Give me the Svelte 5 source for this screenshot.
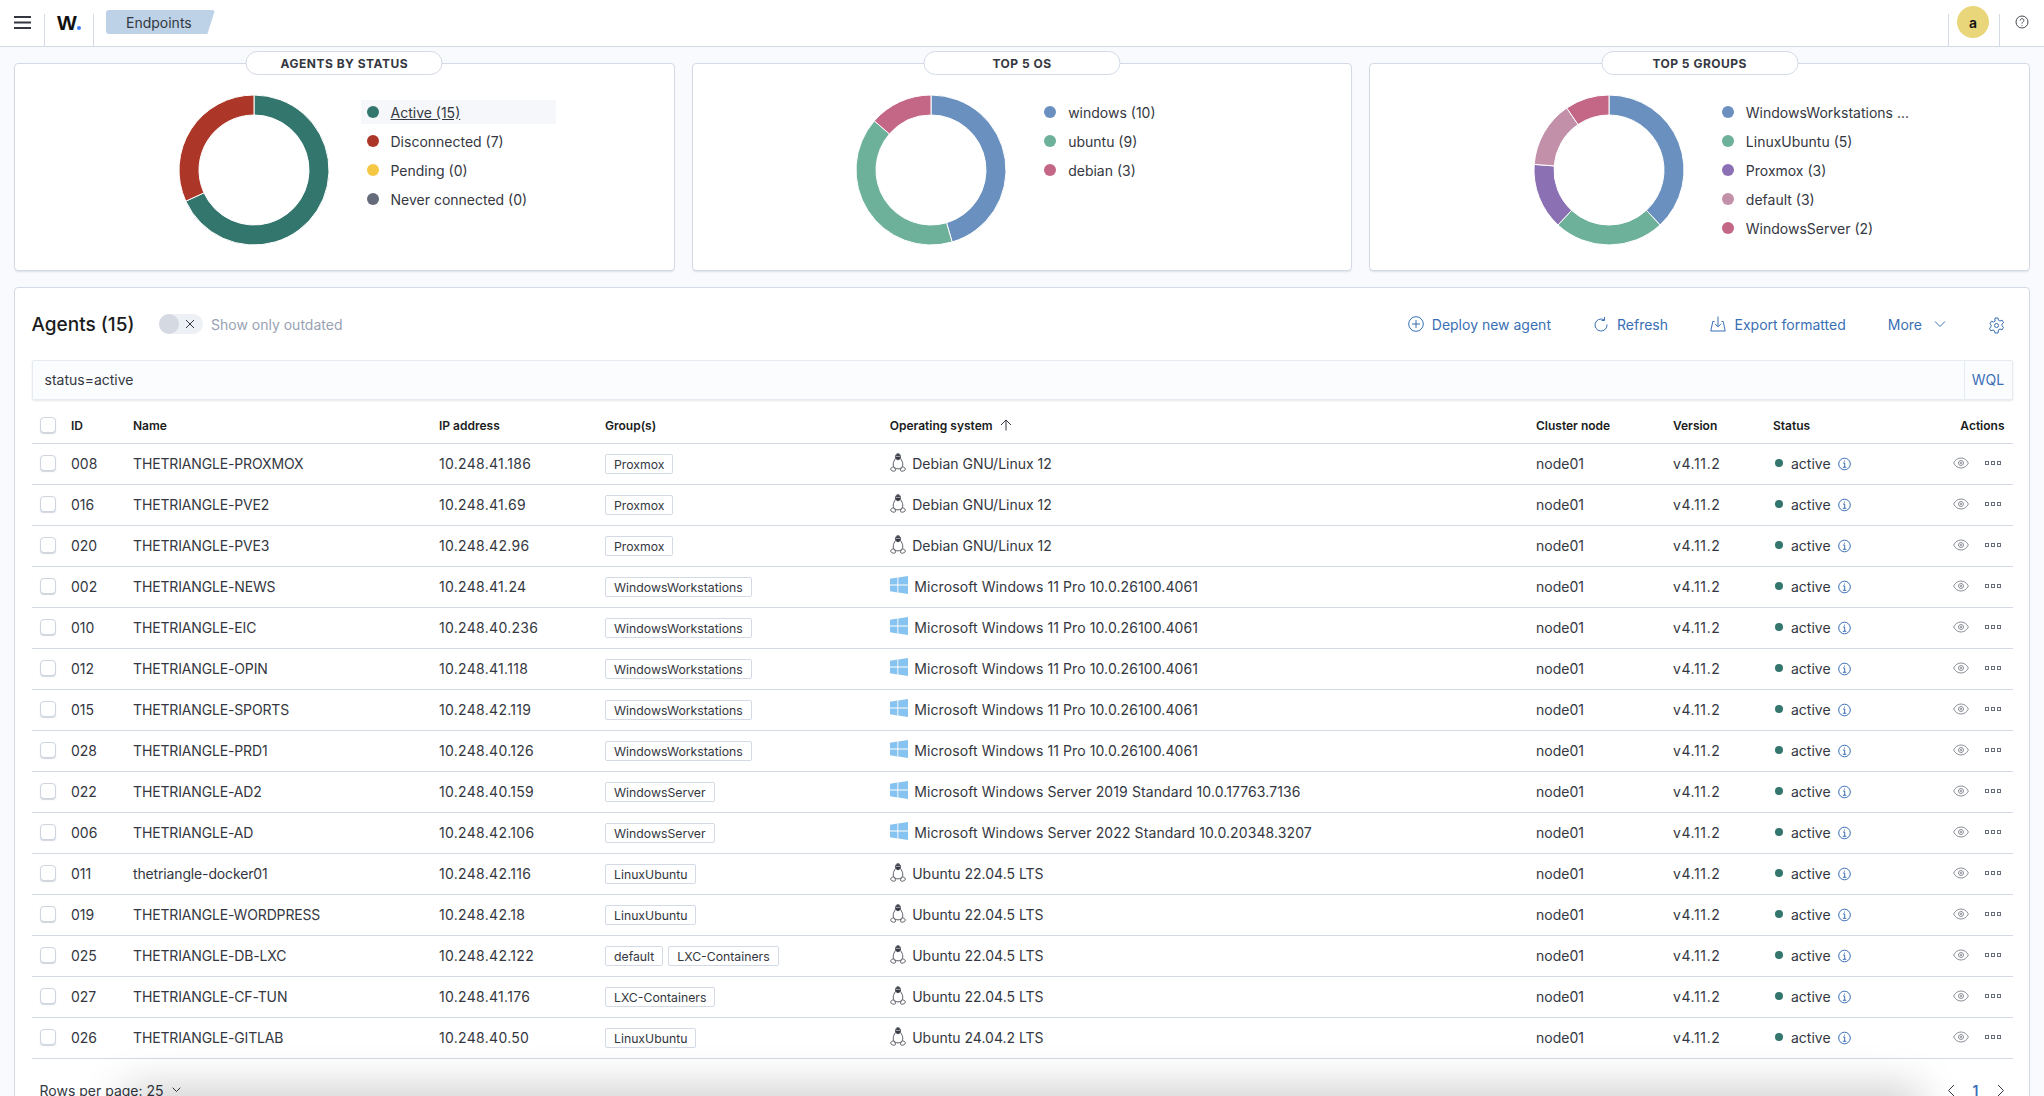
<script>
  const statusChart = {
    title: 'AGENTS BY STATUS',
    items: [
      { label: 'Active (15)', value: 15, color: '#33766e' },
      { label: 'Disconnected (7)', value: 7, color: '#ac3627' },
      { label: 'Pending (0)', value: 0, color: '#f4c845' },
      { label: 'Never connected (0)', value: 0, color: '#666b7c' }
    ]
  };
  const osChart = {
    title: 'TOP 5 OS',
    items: [
      { label: 'windows (10)', value: 10, color: '#6a90bf' },
      { label: 'ubuntu (9)', value: 9, color: '#6db19a' },
      { label: 'debian (3)', value: 3, color: '#c46686' }
    ]
  };
  const groupChart = {
    title: 'TOP 5 GROUPS',
    items: [
      { label: 'WindowsWorkstations ...', value: 8, color: '#6a90bf' },
      { label: 'LinuxUbuntu (5)', value: 5, color: '#6db19a' },
      { label: 'Proxmox (3)', value: 3, color: '#8b71b3' },
      { label: 'default (3)', value: 3, color: '#c290a9' },
      { label: 'WindowsServer (2)', value: 2, color: '#c46686' }
    ]
  };
  const charts = [statusChart, osChart, groupChart];

  const W11 = 'Microsoft Windows 11 Pro 10.0.26100.4061';
  const agents = [
    ['008', 'THETRIANGLE-PROXMOX', '10.248.41.186', ['Proxmox'], 'linux', 'Debian GNU/Linux 12'],
    ['016', 'THETRIANGLE-PVE2', '10.248.41.69', ['Proxmox'], 'linux', 'Debian GNU/Linux 12'],
    ['020', 'THETRIANGLE-PVE3', '10.248.42.96', ['Proxmox'], 'linux', 'Debian GNU/Linux 12'],
    ['002', 'THETRIANGLE-NEWS', '10.248.41.24', ['WindowsWorkstations'], 'win', W11],
    ['010', 'THETRIANGLE-EIC', '10.248.40.236', ['WindowsWorkstations'], 'win', W11],
    ['012', 'THETRIANGLE-OPIN', '10.248.41.118', ['WindowsWorkstations'], 'win', W11],
    ['015', 'THETRIANGLE-SPORTS', '10.248.42.119', ['WindowsWorkstations'], 'win', W11],
    ['028', 'THETRIANGLE-PRD1', '10.248.40.126', ['WindowsWorkstations'], 'win', W11],
    ['022', 'THETRIANGLE-AD2', '10.248.40.159', ['WindowsServer'], 'win', 'Microsoft Windows Server 2019 Standard 10.0.17763.7136'],
    ['006', 'THETRIANGLE-AD', '10.248.42.106', ['WindowsServer'], 'win', 'Microsoft Windows Server 2022 Standard 10.0.20348.3207'],
    ['011', 'thetriangle-docker01', '10.248.42.116', ['LinuxUbuntu'], 'linux', 'Ubuntu 22.04.5 LTS'],
    ['019', 'THETRIANGLE-WORDPRESS', '10.248.42.18', ['LinuxUbuntu'], 'linux', 'Ubuntu 22.04.5 LTS'],
    ['025', 'THETRIANGLE-DB-LXC', '10.248.42.122', ['default', 'LXC-Containers'], 'linux', 'Ubuntu 22.04.5 LTS'],
    ['027', 'THETRIANGLE-CF-TUN', '10.248.41.176', ['LXC-Containers'], 'linux', 'Ubuntu 22.04.5 LTS'],
    ['026', 'THETRIANGLE-GITLAB', '10.248.40.50', ['LinuxUbuntu'], 'linux', 'Ubuntu 24.04.2 LTS']
  ];

  // point on a circle, angle in turns from 12 o'clock
  function pt(r, t) {
    const a = t * 2 * Math.PI;
    return `${(75 + r * Math.sin(a)).toFixed(2)} ${(75 - r * Math.cos(a)).toFixed(2)}`;
  }

  function slices(items) {
    const total = items.reduce((s, i) => s + i.value, 0);
    let at = 0;
    return items.filter((i) => i.value > 0).map((i) => {
      const from = at;
      at += i.value / total;
      const big = at - from > 0.5 ? 1 : 0;
      return {
        color: i.color,
        d: `M${pt(75, from)}A75 75 0 ${big} 1 ${pt(75, at)}L${pt(55, at)}A55 55 0 ${big} 0 ${pt(55, from)}Z`
      };
    });
  }
</script>

<div class="page">
  <header class="topbar">
    <button class="menu" aria-label="menu">
      <svg width="17" height="13" viewBox="0 0 17 13"><path d="M0 1h17M0 6.500h17M0 12h17" stroke="#343741" stroke-width="2" /></svg>
    </button>
    <div class="logo">W<span class="logo-dot"></span></div>
    <div class="crumb"><span>Endpoints</span></div>
    <div class="spacer"></div>
    <div class="avatar-cell"><div class="avatar">a</div></div>
    <div class="help">
      <svg width="14" height="14" viewBox="0 0 14 14" fill="none" stroke="#343741" stroke-width=".9">
        <circle cx="7" cy="7" r="6" />
        <path d="M5.200 5.500C5.300 3 8.900 3.100 8.900 5.400 8.900 6.800 7 6.900 7 8.600" />
        <path d="M7 10v.9" />
      </svg>
    </div>
  </header>

  <section class="charts">
    {#each charts as chart}
      <div class="chart-card">
        <div class="pill">{chart.title}</div>
        <div class="chart-body">
          <svg class="donut" width="150" height="150" viewBox="0 0 150 150">
            {#each slices(chart.items) as s}
              <path d={s.d} fill={s.color} stroke="#fff" stroke-width="1" />
            {/each}
          </svg>
          <ul class="legend">
            {#each chart.items as item, i}
              <li class:hot={chart === statusChart && i === 0}>
                <span class="dot" style="background:{item.color}"></span>
                <span class="legend-text">{item.label}</span>
              </li>
            {/each}
          </ul>
        </div>
      </div>
    {/each}
  </section>

  <section class="panel">
    <div class="panel-head">
      <h1>Agents (15)</h1>
      <div class="switch">
        <span class="knob"></span>
        <svg width="10" height="10" viewBox="0 0 10 10"><path d="M1 1l8 8M9 1l-8 8" stroke="#343741" stroke-width="1" /></svg>
      </div>
      <span class="switch-label">Show only outdated</span>
      <div class="spacer"></div>
      <button class="link deploy">
        <svg width="16" height="16" viewBox="0 0 16 16" fill="none" stroke="#3a6fb5"><circle cx="8" cy="8" r="7.300" /><path d="M8 4v8M4 8h8" /></svg>
        Deploy new agent
      </button>
      <button class="link refresh">
        <svg width="14" height="15" viewBox="0 0 14 15" fill="none" stroke="#3a6fb5"><path d="M9.800 2.700A6 6 0 1 0 13 7.500" /><path d="M10.500 0v3.500H7.500" /></svg>
        Refresh
      </button>
      <button class="link export">
        <svg width="16" height="16" viewBox="0 0 16 16" fill="none" stroke="#3a6fb5"><path d="M4.500 5.500H2.800L.8 15h14.400l-2-9.500h-1.700" /><path d="M8 .5v10M5 7.800l3 3 3-3" /></svg>
        Export formatted
      </button>
      <button class="link more">
        More
        <svg width="12" height="8" viewBox="0 0 12 8" fill="none" stroke="#3a6fb5"><path d="M1 1.500l5 5 5-5" /></svg>
      </button>
      <button class="gear" aria-label="settings">
        <svg width="17" height="17" viewBox="0 0 17 17" fill="none" stroke="#3a6fb5">
          <path d="M7 1h3l.5 2.200 1.500.8 2.100-.8 1.400 2.500-1.600 1.500v1.600l1.600 1.500-1.400 2.500-2.100-.8-1.500.8L10 16H7l-.5-2.200-1.500-.8-2.100.8-1.400-2.500 1.600-1.500V8.200L2 6.700l1.400-2.500 2.100.8 1.500-.8z" />
          <circle cx="8.500" cy="8.500" r="2" />
        </svg>
      </button>
    </div>

    <div class="search">
      <div class="query">status=active</div>
      <div class="wql">WQL</div>
    </div>

    <table>
      <colgroup>
        <col class="c-check" /><col class="c-id" /><col class="c-name" /><col class="c-ip" /><col class="c-group" />
        <col class="c-os" /><col class="c-node" /><col class="c-ver" /><col class="c-status" /><col class="c-act" />
      </colgroup>
      <thead>
        <tr>
          <th><span class="box"></span></th>
          <th>ID</th>
          <th>Name</th>
          <th>IP address</th>
          <th>Group(s)</th>
          <th>
            <span class="sort">Operating system
              <svg width="12" height="12" viewBox="0 0 12 12" fill="none" stroke="#343741"><path d="M6 11.500V1M1 6l5-5 5 5" /></svg>
            </span>
          </th>
          <th>Cluster node</th>
          <th>Version</th>
          <th>Status</th>
          <th class="right">Actions</th>
        </tr>
      </thead>
      <tbody>
        {#each agents as [id, name, ip, groups, os, osName]}
          <tr>
            <td><span class="box"></span></td>
            <td>{id}</td>
            <td class="agent-name">{name}</td>
            <td class="agent-ip">{ip}</td>
            <td>
              <div class="tags">
                {#each groups as g}<span class="tag">{g}</span>{/each}
              </div>
            </td>
            <td>
              <div class="os" class:win={os === 'win'}>
                {#if os === 'linux'}
                  <svg class="os-icon" width="16" height="19" viewBox="0 0 16 19" fill="none" stroke="#343741" stroke-width=".8">
                    <path d="M8 .6C6.300.6 5.600 2 5.700 3.600 5.800 5 5.400 5.800 4.600 7 3.600 8.600 3 10.300 3.300 12.300c.3 1.900 2 3.600 4.700 3.600s4.400-1.700 4.700-3.600C13 10.300 12.400 8.600 11.400 7c-.8-1.200-1.200-2-1.100-3.400C10.400 2 9.700.6 8 .6z" />
                    <path d="M6 2.800C6.500 1 9.500 1 10 2.800c.2 1.500-.1 2.700-.5 3.400-.6.600-2.400.600-3 0C6.100 5.500 5.800 4.300 6 2.800z" fill="#343741" />
                    <circle cx="7" cy="3.400" r=".6" fill="#fff" stroke="none" />
                    <circle cx="9" cy="3.400" r=".6" fill="#fff" stroke="none" />
                    <path d="M3.300 13.800c-1.400.3-2.800 1.300-2.600 2.500.2 1.300 2.600 2.200 4 1.800 1-.3 1-1.600.2-2.600-.4-.6-1-1.100-1.600-1.700zM12.700 13.800c1.400.3 2.800 1.300 2.600 2.500-.2 1.300-2.600 2.200-4 1.800-1-.3-1-1.600-.2-2.600.4-.6 1-1.100 1.600-1.700z" fill="#fff" />
                  </svg>
                {:else}
                  <svg class="os-icon" width="18" height="18" viewBox="0 0 18 18" fill="#87c3f0">
                    <path d="M0 2.700 7.400 1.600V8.500H0zM8.300 1.500 18 0V8.500H8.300zM0 9.500H7.400V16.400L0 15.300zM8.300 9.500H18V18L8.300 16.500z" />
                  </svg>
                {/if}
                <span>{osName}</span>
              </div>
            </td>
            <td>node01</td>
            <td class="agent-version">v4.11.2</td>
            <td>
              <div class="status">
                <span class="status-dot"></span>
                <span>active</span>
                <svg width="13" height="14" viewBox="0 0 13 14" fill="none" stroke="#3a6fb5">
                  <circle cx="6.500" cy="7" r="5.800" />
                  <path d="M5 6h1.700v4M4.800 10.300h3.500M6.500 3.600v1" />
                </svg>
              </div>
            </td>
            <td class="right">
              <div class="actions">
                <svg width="16" height="12" viewBox="0 0 16 12" fill="none" stroke="#8b8f98">
                  <path d="M.6 6C2.500 2.600 5 1 8 1s5.500 1.600 7.400 5C13.500 9.400 11 11 8 11S2.500 9.400.6 6z" />
                  <circle cx="8" cy="6" r="2.500" />
                  <circle cx="8" cy="6" r=".8" />
                </svg>
                <svg width="16" height="4" viewBox="0 0 16 4" fill="none" stroke="#69707d">
                  <rect x=".5" y=".5" width="3" height="3" /><rect x="6.500" y=".5" width="3" height="3" /><rect x="12.500" y=".5" width="3" height="3" />
                </svg>
              </div>
            </td>
          </tr>
        {/each}
      </tbody>
    </table>

    <div class="table-foot">
      <span class="rows">Rows per page: 25
        <svg width="9" height="6" viewBox="0 0 9 6" fill="none" stroke="#343741"><path d="M.7.7l3.800 3.800L8.300.7" /></svg>
      </span>
      <div class="pager">
        <svg width="8" height="13" viewBox="0 0 8 13" fill="none" stroke="#343741"><path d="M7 1L1.500 6.500 7 12" /></svg>
        <span class="page-no">1</span>
        <svg width="8" height="13" viewBox="0 0 8 13" fill="none" stroke="#343741"><path d="M1 1l5.500 5.500L1 12" /></svg>
      </div>
    </div>
  </section>

  <div class="bottom-shade"></div>
</div>

<style>
  :global(body) {
    margin: 0;
    background: #f8fafd;
  }

  .page {
    height: 100vh;
    overflow: hidden;
    font-family: Inter, "Liberation Sans", sans-serif;
    font-size: 14px;
    color: #343741;
    background: #f8fafd;
  }

  .spacer {
    flex: 1;
  }

  button {
    border: 0;
    background: none;
    padding: 0;
    font: inherit;
    cursor: pointer;
  }

  /* top bar */
  .topbar {
    display: flex;
    height: 46px;
    background: #fff;
    border-bottom: 1px solid #d3dae6;
  }

  .menu {
    width: 45px;
    height: 32px;
    margin-top: 14px;
    padding-top: 2px;
    display: flex;
    align-items: flex-start;
    justify-content: center;
    box-sizing: border-box;
    border-right: 1px solid #d3dae6;
  }

  .logo {
    width: 36px;
    height: 32px;
    margin-top: 14px;
    padding-left: 12px;
    border-right: 1px solid #d3dae6;
    font-family: "Liberation Sans", sans-serif;
    font-size: 21px;
    font-weight: 700;
    line-height: 17px;
    letter-spacing: -0.5px;
    color: #111;
  }

  .logo-dot {
    display: inline-block;
    width: 4px;
    height: 4px;
    margin-left: 1px;
    border-radius: 50%;
    background: #3f7cf5;
  }

  .crumb {
    margin: 10px 0 0 12px;
    width: 109px;
    height: 24px;
    display: flex;
    align-items: center;
    padding-left: 20px;
    box-sizing: border-box;
    background: #bdd2e6;
    border-radius: 3px;
    clip-path: polygon(0 0, 100% 0, 93% 100%, 0 100%);
  }

  .avatar-cell {
    width: 52px;
    height: 32px;
    margin-top: 14px;
    box-sizing: border-box;
    border-left: 1px solid #d3dae6;
    border-right: 1px solid #d3dae6;
    position: relative;
  }

  .avatar {
    position: absolute;
    top: -8px;
    left: 8px;
    width: 32px;
    height: 32px;
    border-radius: 50%;
    background: #e9d67a;
    color: #111;
    display: flex;
    align-items: center;
    justify-content: center;
    font-weight: 600;
  }

  .help {
    width: 43px;
    height: 44px;
    padding-right: 1px;
    display: flex;
    justify-content: center;
    align-items: center;
  }

  /* donut cards */
  .charts {
    display: grid;
    grid-template-columns: repeat(3, 1fr);
    gap: 17px;
    padding: 16px 14px 0;
  }

  .chart-card {
    position: relative;
    height: 208px;
    box-sizing: border-box;
    background: #fff;
    border: 1px solid #d3dae6;
    border-radius: 4px;
    box-shadow: 0 2px 2px -1px rgba(152, 162, 179, 0.3);
  }

  .pill {
    position: absolute;
    top: -13px;
    left: 50%;
    transform: translateX(-50%);
    width: 197px;
    height: 24px;
    box-sizing: border-box;
    display: flex;
    align-items: center;
    justify-content: center;
    background: #fff;
    border: 1px solid #d3dae6;
    border-radius: 12px;
    font-size: 12px;
    font-weight: 700;
    letter-spacing: 0.5px;
  }

  .chart-body {
    display: flex;
    gap: 32px;
    width: 430px;
    margin-left: 163.500px;
    padding-top: 31px;
    box-sizing: border-box;
  }

  .donut {
    flex: none;
  }

  .legend {
    list-style: none;
    margin: 5px 0 0;
    padding: 0;
    display: flex;
    flex-direction: column;
    gap: 5px;
    width: 195px;
  }

  .legend li {
    display: flex;
    align-items: center;
    height: 24px;
    padding-left: 6px;
    gap: 12px;
  }

  .legend li.hot {
    background: #f5f7fa;
  }

  .legend li.hot .legend-text {
    text-decoration: underline;
  }

  .dot {
    width: 12px;
    height: 12px;
    border-radius: 50%;
  }

  /* agents panel */
  .panel {
    margin: 16px 14px 0;
    padding: 0 16.500px;
    background: #fff;
    border: 1px solid #d3dae6;
    border-radius: 4px;
    height: 900px;
    box-sizing: border-box;
  }

  .panel-head {
    display: flex;
    align-items: center;
    height: 72px;
  }

  h1 {
    margin: 0;
    font-size: 19px;
    font-weight: 500;
    color: #1a1c21;
    width: 127.500px;
  }

  .switch {
    width: 44px;
    height: 20px;
    border-radius: 10px;
    background: #edf0f5;
    display: flex;
    align-items: center;
    gap: 6px;
  }

  .knob {
    width: 20px;
    height: 20px;
    border-radius: 50%;
    background: #d5d9e2;
  }

  .switch-label {
    margin-left: 8px;
    color: #98a2b3;
  }

  .link {
    display: flex;
    align-items: center;
    color: #3a6fb5;
    gap: 9px;
    white-space: nowrap;
  }

  .deploy {
    gap: 8px;
  }

  .refresh {
    margin-left: 43px;
  }

  .export {
    margin-left: 41.500px;
  }

  .more {
    margin-left: 42px;
  }

  .more svg {
    margin-left: 2.500px;
  }

  .gear {
    margin: 2px 8px 0 42px;
    height: 17px;
  }

  .search {
    display: flex;
    height: 40px;
    background: #fbfcfd;
    border: 1px solid #e6ebf2;
    border-radius: 2px;
    box-shadow: 0 1px 2px rgba(152, 162, 179, 0.25);
    box-sizing: border-box;
  }

  .query {
    flex: 1;
    padding-left: 12px;
    line-height: 38px;
  }

  .wql {
    width: 48px;
    border-left: 1px solid #e6ebf2;
    color: #3a6fb5;
    line-height: 38px;
    text-align: center;
    box-sizing: border-box;
  }

  table {
    width: 1981px;
    border-collapse: collapse;
    table-layout: fixed;
    margin-top: 2px;
  }

  .c-check { width: 31.500px; }
  .c-id { width: 62px; }
  .c-name { width: 306px; }
  .c-ip { width: 166px; }
  .c-group { width: 284.700px; }
  .c-os { width: 646.300px; }
  .c-node { width: 137px; }
  .c-ver { width: 100px; }
  .c-status { width: 150px; }

  th {
    height: 41px;
    padding: 6px 8px 0;
    box-sizing: border-box;
    text-align: left;
    font-size: 12px;
    font-weight: 600;
    color: #1a1c21;
    border-bottom: 1px solid #d3dae6;
  }

  td {
    height: 41px;
    padding: 0 8px 0.500px;
    border-bottom: 1px solid #d3dae6;
    box-sizing: border-box;
    white-space: nowrap;
    overflow: hidden;
  }

  td.agent-name {
    letter-spacing: -0.15px;
  }

  td.agent-ip {
    letter-spacing: 0.3px;
  }

  td.agent-version {
    letter-spacing: 0.6px;
  }

  .os.win {
    letter-spacing: 0.1px;
  }

  th.right,
  td.right {
    text-align: right;
  }

  .box {
    display: block;
    width: 16px;
    height: 16px;
    box-sizing: border-box;
    background: #fff;
    border: 1px solid #cfd5df;
    border-radius: 4px;
    box-shadow: 0 1px 1px rgba(152, 162, 179, 0.45);
  }

  .sort {
    display: inline-flex;
    align-items: center;
    gap: 7px;
  }

  .tags {
    display: flex;
    gap: 5px;
  }

  .tag {
    display: block;
    height: 20px;
    line-height: 19px;
    padding: 0 8px;
    box-sizing: border-box;
    font-size: 12.250px;
    background: #fff;
    border: 1px solid #d3dae6;
    border-radius: 2px;
    margin-top: 1px;
  }

  .os {
    display: flex;
    align-items: center;
    gap: 6.500px;
  }

  .os-icon {
    flex: none;
    margin-top: -2px;
  }

  .status {
    display: flex;
    align-items: center;
    padding-left: 2px;
  }

  .status-dot {
    width: 8px;
    height: 8px;
    border-radius: 50%;
    background: #33766e;
    margin-right: 8px;
  }

  .status svg {
    margin: 2px 0 0 7px;
  }

  .actions {
    display: flex;
    justify-content: flex-end;
    align-items: center;
    gap: 16px;
    padding-right: 4px;
  }

  .table-foot {
    display: flex;
    justify-content: space-between;
    align-items: center;
    padding: 23px 8px 0;
  }

  .rows {
    display: flex;
    align-items: center;
    gap: 8px;
  }

  .pager {
    display: flex;
    align-items: center;
    gap: 18px;
  }

  .page-no {
    color: #3a6fb5;
    font-weight: 600;
  }

  /* soft shadow rising from under the window edge */
  .bottom-shade {
    position: fixed;
    left: 130px;
    right: 130px;
    bottom: -30px;
    height: 30px;
    box-shadow: 0 0 44px 6px rgba(0, 0, 0, 0.22);
    pointer-events: none;
  }
</style>
